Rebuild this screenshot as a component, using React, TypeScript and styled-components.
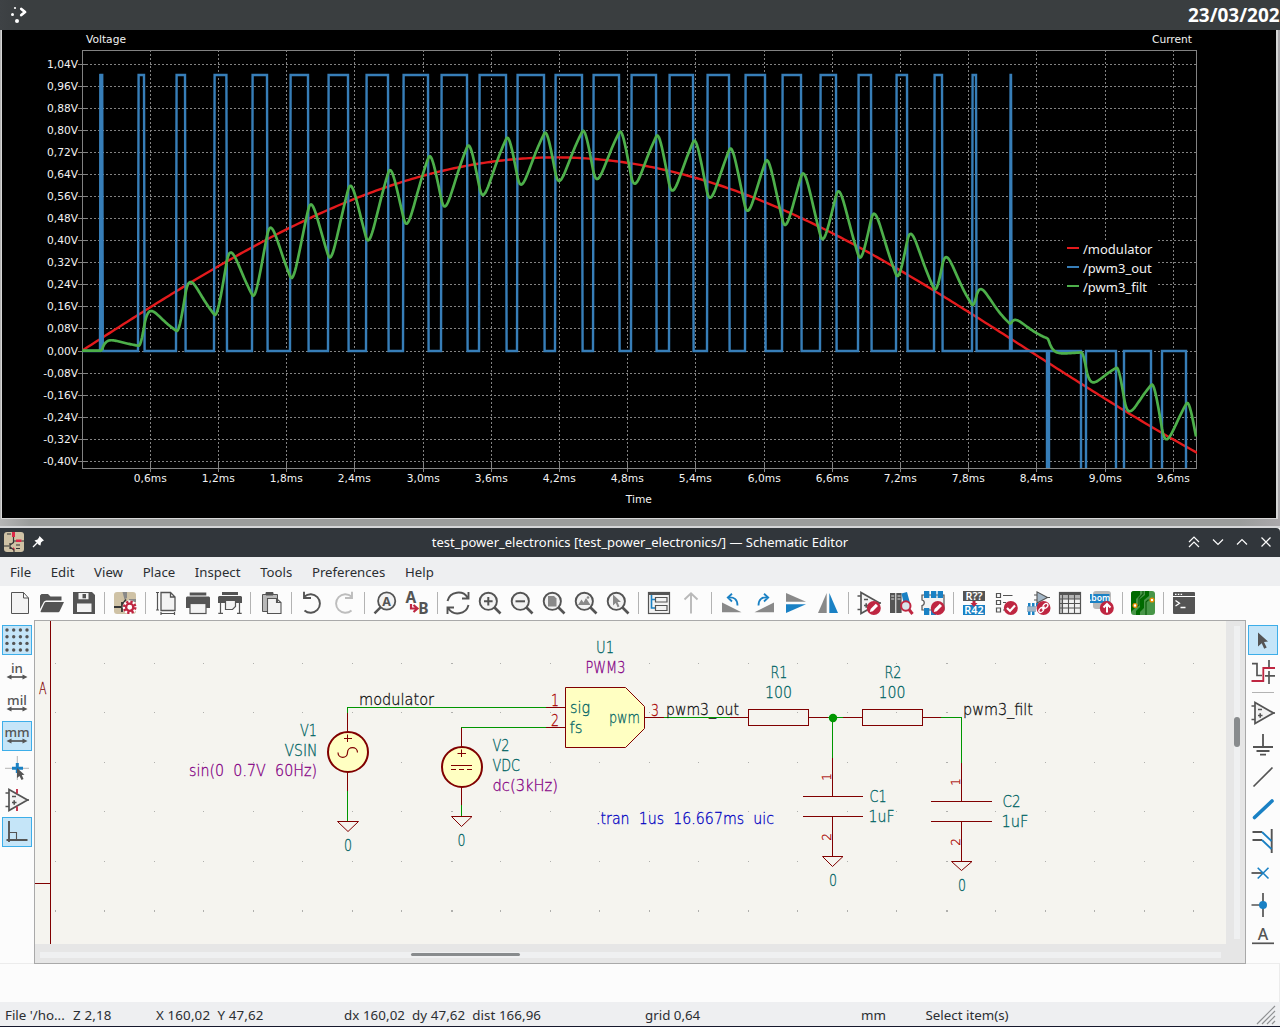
import React from "react";
import styled, { createGlobalStyle } from "styled-components";

const UI = '"Noto Sans", "Open Sans", sans-serif';
const AXIS = '"DejaVu Sans", sans-serif';
const D = "#545454";
const L = "#f3f3f3";
const B = "#1a81c4";
const R = "#bf2641";
const G = "#898989";

const Global = createGlobalStyle`
  body { margin: 0; background: #fcfcfc; overflow: hidden; }
  * { box-sizing: border-box; }
  svg { display: block; flex: none; }
`;

const Screen = styled.div`
  width: 1280px; height: 1027px; display: flex; flex-direction: column;
  overflow: hidden; font-family: ${UI}; font-size: 13.33px; color: #2b2e31;
`;
const Panel = styled.header`
  height: 30px; flex: none; display: flex; align-items: center; justify-content: space-between;
  background: linear-gradient(90deg, #3e4245, #3a3e40 20px, #3a3e40);
  padding-left: 8px;
`;
const Clock = styled.div`
  width: 92px; white-space: nowrap; color: #fff;
  font-weight: 700; font-size: 18.95px; line-height: 30px;
`;
const Desktop = styled.section`
  height: 498px; flex: none; padding-left: 1px;
  background: linear-gradient(90deg, #b5b5b5, #9b9d9c 30px, #9b9d9c 1240px, #aaa8ab);
  border-bottom: 2px solid #d5d6d8;
`;
const SimWindow = styled.div`
  width: 1277px; height: 489px; background: #000;
  border: solid #d6d6d6; border-width: 0 2px 1px 1px;
`;
const TitleBar = styled.div`
  height: 29px; flex: none; display: grid; grid-template-columns: 1fr auto 1fr; align-items: center;
  background: #31363b; color: #fcfcfc; border-radius: 0 4px 0 0; padding: 0 4px 2px;
  font-size: 13px;
`;
const Group = styled.div<{ $end?: boolean; $gap: number }>`
  display: flex; align-items: center; gap: ${p => p.$gap}px;
  justify-content: ${p => (p.$end ? "flex-end" : "flex-start")};
  margin-right: ${p => (p.$end ? 4 : 0)}px;
`;
const MenuBar = styled.nav`
  height: 29px; flex: none; display: flex; align-items: center; gap: 19.7px;
  background: #eeeff1; padding: 0 10px; font-size: 13.2px;
`;
const MenuItem = styled.span`line-height: 20px;`;
const ToolBar = styled.div`
  height: 34px; flex: none; display: flex; align-items: center; padding-left: 4px; background: #fcfcfc;
`;
const Tool = styled.div`
  width: 32px; height: 32px; display: flex; align-items: center; justify-content: center; flex: none;
`;
const IconSvg = styled.svg`overflow: visible;`;
const Sep = styled.div`
  width: 9px; height: 22px; flex: none; display: flex; justify-content: center;
  &::before { content: ""; width: 1px; height: 22px; background: #b3b3b3; }
`;
const Work = styled.div`display: flex; height: 344px; flex: none; background: #fcfcfc;`;
const Side = styled.div`
  width: 34px; flex: none; display: flex; flex-direction: column; align-items: center; gap: 2px;
  padding-top: 5px; height: 344px; overflow: hidden; border-bottom: 1px solid #ececec;
`;
const SideTool = styled.div<{ $on?: boolean }>`
  width: 30px; height: 30px; flex: none; display: flex; align-items: center; justify-content: center;
  border: 1px solid ${p => (p.$on ? "#3daee9" : "transparent")};
  background: ${p => (p.$on ? "#c5e5f8" : "transparent")};
`;
const SideSep = styled.div`
  width: 22px; height: 7px; flex: none; display: flex; align-items: center;
  &::before { content: ""; width: 22px; height: 1px; background: #b3b3b3; }
`;
const CanvasFrame = styled.div`
  width: 1212px; height: 344px; flex: none; border: 1px solid #a9a9a9; background: #e6e6e6;
  display: grid; grid-template: 323px 19px / 1191px 19px;
`;
const VTrack = styled.div`
  margin: 5px 0 5px 8px; width: 6px; background: #eff0f1; padding-top: 91px;
  &::before { content: ""; display: block; height: 30px; border-radius: 3px; background: #888b8d; }
`;
const HTrack = styled.div`
  margin: 8px 5px 0 5px; height: 6px; background: #eff0f1; padding: 1px 0 0 371px;
  &::before { content: ""; display: block; width: 109px; height: 3px; border-radius: 2px; background: #888b8d; }
`;
const MessagePanel = styled.div`height: 38px; flex: none; background: #fcfcfc; border-right: 1px solid #ececec;`;
const StatusBar = styled.footer`
  height: 25px; flex: none; display: grid; align-items: center;
  grid-template-columns: 68px 83px 188px 301px 216px 64.5px 1fr 24px;
  padding: 2px 0 0 5px; background: #eeeff1; border-bottom: 1px solid #15182c; white-space: pre;
`;
const Readout = styled.span<{ $track?: number }>`letter-spacing: ${p => p.$track ?? 0}px;`;

/* ---------- simulation plot ---------- */
const X0 = 82.1, PX_MS = 113.65, Y0 = 350.6, PX_V = 276;
const rises = Array.from({ length: 25 }, (_, k) => 100.2 + k * 37.9);
const falls = [102.2, 144, 185, 226.4, 267, 308, 348, 388, 428, 467, 506, 544, 582, 619, 656, 693, 729, 765, 801, 836, 871, 907, 942, 976, 1011];
const negative: [number, number][] = [[1047, 1049], [1081, 1086], [1116, 1124], [1151, 1162], [1186, 1230]];

function pwmPath() {
  let d = "M82 351";
  rises.forEach((r, i) => {
    const a = Math.round(r), f = falls[i];
    d += `H${a}L${a + 0.6} 75H${f}L${f + 0.6} 351`;
  });
  negative.forEach(([a, b]) => { d += `H${a}V500H${b}V351`; });
  return d;
}
function sinePath() {
  const pts: string[] = [];
  for (let x = 82; x <= 1198; x += 3) {
    const t = (x - X0) / PX_MS / 1000;
    pts.push(`${x} ${(Y0 - PX_V * 0.7 * Math.sin(2 * Math.PI * 60 * t)).toFixed(2)}`);
  }
  return "M" + pts.join("L");
}
/* two cascaded 100 ohm / 1 uF sections driven by the PWM output */
function filteredPath() {
  const tau = 0.1 * PX_MS, h = 0.05;
  let a = 0, b = 0;
  const pts: string[] = [];
  for (let i = 0; i * h + 82 <= 1196; i++) {
    const x = 82 + i * h;
    let v = 0;
    for (let k = 0; k < 25; k++) if (x >= rises[k] + 0.65 - k / 35 && x < falls[k] + 0.25) v = 1;
    for (const [s, e] of negative) if (x >= s + 0.4 && x < e) v = -1;
    const da = (v - 2 * a + b) / tau, db = (a - b) / tau;
    a += da * h; b += db * h;
    if (i % 20 === 0) pts.push(`${x.toFixed(1)} ${(Y0 - PX_V * b).toFixed(2)}`);
  }
  return "M" + pts.join("L");
}
const yTicks = [64, 86, 108, 130, 152, 174, 196, 218, 240, 262, 284, 306, 328, 351, 373, 395, 417, 439, 461];
const xTicks = [150, 218, 286, 354, 423, 491, 559, 627, 695, 764, 832, 900, 968, 1036, 1105, 1173];
const comma = (n: number, digits: number) => n.toFixed(digits).replace(".", ",");

function Plot() {
  return (
    <svg width="1274" height="488" viewBox="2 30 1274 488">
      <defs><clipPath id="area"><rect x="82" y="51" width="1115" height="417" /></clipPath></defs>
      <g stroke="#828282" shapeRendering="crispEdges">
        {yTicks.map(y => <g key={y}><path d={`M82 ${y + 0.5}H1196`} strokeDasharray="2 2" /><path d={`M78 ${y + 0.5}H87`} /></g>)}
        {xTicks.map(x => <g key={x}><path d={`M${x + 0.5} 50V468`} strokeDasharray="2 2" /><path d={`M${x + 0.5} 464V472`} /></g>)}
        <rect x="82.5" y="50.5" width="1114" height="418" fill="none" />
      </g>
      <g fill="none" strokeWidth="2" clipPath="url(#area)" strokeLinejoin="miter">
        <path d={sinePath()} stroke="#e41a1c" strokeWidth="2.4" />
        <path d={pwmPath()} stroke="#377eb8" strokeWidth="2.4" />
        <path d="M101 74V352M1048 350V470" stroke="#377eb8" strokeWidth="3.4" />
        <path d={filteredPath()} stroke="#4daf4a" strokeWidth="2.7" strokeLinejoin="round" />
      </g>
      <g fontFamily={AXIS} fontSize="10.67" fill="#f2f2f2">
        {yTicks.map((y, i) => <text key={y} x="78" y={y + 4} textAnchor="end">{comma(1.04 - i * 0.08 + 1e-9, 2)}V</text>)}
        {xTicks.map((x, i) => <text key={x} x={x + 0.3} y="482" textAnchor="middle">{comma((i + 1) * 0.6, 1)}ms</text>)}
        <text x="86" y="43">Voltage</text>
        <text x="1192" y="43" textAnchor="end">Current</text>
        <text x="638.8" y="503" textAnchor="middle">Time</text>
      </g>
      <rect x="1063" y="240" width="94" height="56" fill="#000" />
      <g fontFamily={UI} fontSize="13" fill="#f2f2f2">
        {[["/modulator", "#e41a1c"], ["/pwm3_out", "#377eb8"], ["/pwm3_filt", "#4daf4a"]].map(([n, c], i) => (
          <g key={n}><rect x="1067" y={247 + 19 * i} width="12" height="2" fill={c} /><text x="1083" y={254 + 19 * i}>{n}</text></g>
        ))}
      </g>
    </svg>
  );
}

/* ---------- schematic ---------- */
const TEAL = "#006464", PURPLE = "#840084", PIN = "#a90000", INK = "#0f0f0f", NOTE = "#0000c2", MAROON = "#800000";
type Lbl = [string, number, number, number, string];
const labels: Lbl[] = [
  ["A", 39, 694, 7.5, MAROON],
  ["U1", 596, 653, 18, TEAL], ["PWM3", 585.5, 673, 40, PURPLE],
  ["R1", 770.5, 678, 17, TEAL], ["100", 765, 698, 27, TEAL],
  ["R2", 884.5, 678, 17, TEAL], ["100", 878.5, 698, 27, TEAL],
  ["sig", 570, 713, 20, TEAL], ["fs", 569.5, 732.5, 13, TEAL], ["pwm", 609, 723, 31, TEAL],
  ["1", 551, 706, 8, PIN], ["2", 551, 725.5, 8, PIN], ["3", 651, 715.5, 8, PIN],
  ["modulator", 359, 705, 75, INK], ["pwm3_out", 666, 715, 73, INK], ["pwm3_filt", 963, 715, 70, INK],
  ["V1", 300, 736, 17, TEAL], ["VSIN", 284.5, 756, 33, TEAL], ["sin(0 0.7V 60Hz)", 189, 776, 128, PURPLE],
  ["V2", 492.5, 751, 17, TEAL], ["VDC", 492.5, 771, 27.5, TEAL], ["dc(3kHz)", 492.5, 791, 65.5, PURPLE],
  [".tran 1us 16.667ms uic", 596, 824, 178, NOTE],
  ["C1", 869.5, 802, 17, TEAL], ["1uF", 868.5, 822, 26, TEAL],
  ["C2", 1002.5, 807, 18, TEAL], ["1uF", 1001.5, 827, 27, TEAL],
  ["0", 344, 851, 8, TEAL], ["0", 457.5, 846, 8, TEAL], ["0", 829, 886, 8, TEAL], ["0", 958, 890.5, 8, TEAL],
];
const turned: [string, number, number][] = [["1", 831, 777], ["2", 831, 837], ["1", 960, 782], ["2", 960, 842]];

function Schematic() {
  const dots: React.ReactNode[] = [];
  [663, 712, 762, 811, 861, 910].forEach((y, j) => {
    for (let i = 0; i < 24; i++)
      dots.push(<rect key={`${i}-${j}`} x={Math.floor(55.3 + i * 49.5)} y={y} width={i === 8 || i === 18 ? 2 : 1} height={j === 5 ? 2 : 1} />);
  });
  return (
    <svg width="1191" height="323" viewBox="35 621 1191 323" style={{ background: "#f5f4ef" }}>
      <g fill="#b0b0ad" shapeRendering="crispEdges">{dots}</g>
      <g fill="none" stroke={MAROON} shapeRendering="crispEdges">
        <path d="M50.5 621V944M35 883.5H50" />
        <path d="M347.5 713V732M347.5 772V792M461.5 727V747M461.5 787V806M545 707.5H566M546 727.5H566M644 717.5H665M730 717.5H749M808 717.5H828M843 717.5H862M922 717.5H942M832.5 757V797M832.5 816V856M961.5 763V802M961.5 821V861" />
        <path d="M803 796.5H863M803 816.5H863M931 801.5H992M931 821.5H992" />
        <rect x="748.5" y="709.5" width="60" height="16" /><rect x="862.5" y="709.5" width="60" height="16" />
      </g>
      <path d="M565.5 687.5H625.5L644.5 706.5V728.5L625.5 747.5H565.5Z" fill="#ffffc2" stroke={MAROON} />
      <g fill="none" stroke="#009600" shapeRendering="crispEdges">
        <path d="M347.5 713V707.5H546M347.5 791V822M461.5 728V727.5H546M461.5 805V817M664 717.5H730M828 717.5H843M832.5 718V758M941 717.5H961.5V763" />
      </g>
      <circle cx="833" cy="718" r="4.2" fill="#009600" />
      <g fill="none" stroke={MAROON}>
        <circle cx="348" cy="752" r="20" strokeWidth="2" fill="#ffffc2" />
        <circle cx="462" cy="767" r="20" strokeWidth="2" fill="#ffffc2" />
        <path d="M347.5 734.5V742M344 738.5H352M461.5 749.5V757M457.5 753.5H466" />
        <path d="M338 752.5C338 759 347.5 759 347.5 752.5S357.5 746 357.5 752.5" strokeWidth="1.2" />
        <path d="M451 765.5H472M451 769.5H456M459 769.5H464M467 769.5H472" />
        <path d="M337.5 821.5H358.5L348 831.5ZM451.5 816.5H472L461.5 826.5ZM822.5 856.5H843L832.5 866.5ZM951.5 861.5H972L961.5 870.5Z" />
      </g>
      <g fontFamily='"DejaVu Sans", sans-serif' fontWeight="200" fontSize="15" strokeWidth="0.28" wordSpacing="5">
        {labels.map(([t, x, y, w, c], i) => (
          <text key={i} x={x} y={y + 0.2} fill={c} stroke={c} textLength={w} lengthAdjust="spacingAndGlyphs">{t}</text>
        ))}
        {turned.map(([t, x, y], i) => (
          <text key={i} transform={`translate(${x} ${y}) rotate(-90)`} textAnchor="middle" fontSize="12" fill={PIN} stroke={PIN}>{t}</text>
        ))}
      </g>
    </svg>
  );
}

/* ---------- icons ---------- */
const Ic = ({ children, s = 24 }: { children: React.ReactNode; s?: number }) => (
  <IconSvg width={s} height={s} viewBox="0 0 24 24" fill="none" stroke={D} strokeWidth="1.6">{children}</IconSvg>
);
const Lens = () => <><circle cx="10.3" cy="10.3" r="8.6" fill={L} strokeWidth="1.9" /><path d="M16 16L22.5 22.5" strokeWidth="2.6" /></>;
const Badge = ({ x = 16.8, children }: { x?: number; children: React.ReactNode }) => (
  <g stroke="none"><circle cx={x} cy="17" r="7" fill={R} />{children}</g>
);
const Pencil = () => <Badge><path d="M12.8 21L13.6 18L18.8 12.8L21 15L15.8 20.2Z" fill="#fff" /></Badge>;
const OpAmp = () => <><path d="M4 1.5V22.5L22.5 12Z" fill={L} strokeWidth="1.7" /><path d="M.5 5H4M.5 18.5H4M22 12H24M7 8.5H11M7 14.5H11.5M9.2 12.3V16.8" strokeWidth="1.6" /></>;
const Word = ({ x, y, s, c = D, w = 600, children }: { x: number; y: number; s: number; c?: string; w?: number; children: string }) => (
  <text x={x} y={y} fontSize={s} fill={c} stroke="none" fontWeight={w} textAnchor="middle" fontFamily={UI}>{children}</text>
);

const icons: Record<string, React.ReactNode> = {
  new: <path d="M3.5 1.5H15.5L20.5 7V22.5H3.5ZM15.5 1.5V7H20.5" fill={L} strokeWidth="1" />,
  open: <g stroke="none" fill={D}><path d="M0 18V4.5L1.5 3H8L10.5 5.5H21.5V9.5H6L4 10.5Z" /><path d="M5.5 11H24L19.5 20.5L18.5 21.3H1L.5 20.5L4.5 12Z" /></g>,
  save: <g stroke="none"><path d="M1 1H20L23 4V23H1Z" fill={D} /><path d="M6.5 2H16.5V8.3H6.5ZM5 12.5H19.5V21H5Z" fill={L} /><path d="M10.5 3H14V7.3H10.5Z" fill={D} /></g>,
  symedit: <><rect x="1" y="1" width="22" height="22" rx="3" fill="#cfc2a5" stroke="none" /><path d="M9.5 1H14V7L11.5 8.5ZM16 8H23V11H16Z" fill={G} stroke="none" /><path d="M1 16H8M9 11V21" stroke="#333" strokeWidth="1.8" /><path d="M9.5 13L13 8.5" stroke="#333" /><circle cx="16.7" cy="16.3" r="7" fill="#fff" stroke="none" /><circle cx="16.7" cy="16.3" r="5.5" stroke={R} strokeWidth="2.6" strokeDasharray="2.3 2.02" /><circle cx="16.7" cy="16.3" r="3.6" stroke={R} strokeWidth="2.3" /></>,
  page: <><path d="M7 1.5H16.5L21 6V19.5H7ZM16.5 1.5V6H21" fill={L} strokeWidth="1.3" /><path d="M3.5 1.5V19M2 1.5H5M2 19H5M7 22.5H20.5M7 21V24M20.5 21V24" strokeWidth="1.2" /></>,
  print: <><path d="M3.7 1.5H20.3V4.5H3.7ZM1 5.5H23L24 6.5V17H20V13H4V17H0V6.5Z" fill={D} stroke="none" /><rect x="4" y="12.5" width="16" height="10" fill={L} strokeWidth="1.2" /></>,
  plot: <><path d="M4 1H20V4H4ZM1 5H23L24 6V12H0V6Z" fill={D} stroke="none" /><path d="M7.5 9.5H17.5V15.5L14.5 18.5H7.5Z" fill={L} strokeWidth="1.2" /><path d="M2.5 12V22M21.5 12V22M.3 22.3H5M19 22.3H23.7" strokeWidth="1.2" /></>,
  paste: <><path d="M3.5 3.5H7V1.5H14V3.5H18.5V20.5H3.5Z" fill="#b9b9b9" strokeWidth="1" /><path d="M7 1.5H14V4.5H7Z" fill={D} stroke="none" /><path d="M8.5 7.5H17.5L22 11.5V22.5H8.5ZM17.5 7.5V11.5H22" fill={L} strokeWidth="1.1" /></>,
  undo: <path d="M4.5 5.5A9.3 9.3 0 1 1 4.5 19.5M4 .8V7H11" strokeWidth="1.9" />,
  redo: <path d="M19.5 5.5A9.3 9.3 0 1 0 19.5 19.5M20 .8V7H13" stroke="#bdbdbd" strokeWidth="1.9" />,
  find: <><circle cx="13.7" cy="10" r="8.6" strokeWidth="1.8" fill={L} /><path d="M7.5 16.3L1.5 22.3" strokeWidth="2.4" /><Word x={13.7} y={14.5} s={12.5} w={700}>A</Word></>,
  replace: <><Word x={5.8} y={11.8} s={15.5} w={700}>A</Word><Word x={18.5} y={22.8} s={15.5} w={700}>B</Word><path d="M6 13V17.5H11M8.5 14L12.5 17.5L8.5 21" stroke={R} strokeWidth="2.2" /></>,
  refresh: <path d="M1.5 10C4 0 17 -1 21.5 6.5M22.5 1V7.5H16M22.5 14C20 24 7 25 2.5 17.5M1.5 23V16.5H8" strokeWidth="1.9" />,
  zin: <><Lens /><path d="M6 10.3H14.6M10.3 6V14.6" strokeWidth="2" /></>,
  zout: <><Lens /><path d="M5.5 10.3H15" strokeWidth="2" /></>,
  zpage: <><Lens /><path d="M6 5H12L14.5 7.5V15.5H6Z" fill={G} stroke="none" /></>,
  zobj: <><Lens /><path d="M4 14L7.5 8.5L9.5 11.5L12 7L16.5 14Z" fill={G} stroke="none" /><circle cx="14" cy="6.5" r="1.3" fill={G} stroke="none" /></>,
  zsel: <><Lens /><path d="M7 3.5L15 11H11.5L13.5 15.5L11.5 16.3L9.8 12L7 14.5Z" fill={G} stroke="none" /></>,
  nav: <><rect x="1.5" y="1.5" width="21" height="21" fill={L} strokeWidth="1.2" /><path d="M1 1H23V4H1Z" fill={D} stroke="none" /><path d="M4.5 4V17H8M4.5 8.5H8" stroke={B} strokeWidth="1.6" /><path d="M8.5 6.5H20V11H8.5ZM8.5 14.5H20V19.5H8.5Z" strokeWidth="1.2" /></>,
  up: <path d="M12 2.5V22.5M5.5 8.5L12 2.2L18.5 8.5" stroke="#b9b9b9" strokeWidth="1.9" />,
  rotl: <><path d="M2 11.5L21.5 21.3H2Z" fill={G} stroke="none" /><path d="M8 6.5C14 5.5 17.5 8.5 17.5 14.5M12 2.8L7.8 6.5L12 10.5" stroke={B} strokeWidth="1.8" /></>,
  rotr: <><path d="M22 11.5L2.5 21.3H22Z" fill={G} stroke="none" /><path d="M16 6.5C10 5.5 6.5 8.5 6.5 14.5M12 2.8L16.2 6.5L12 10.5" stroke={B} strokeWidth="1.8" /></>,
  flipv: <g stroke="none"><path d="M2 2L22 10.7H2Z" fill={G} /><path d="M2 13.3H22L2 22Z" fill={B} /></g>,
  fliph: <g stroke="none"><path d="M10.7 2V22H2Z" fill={G} /><path d="M13.3 2V22H22Z" fill={B} /></g>,
  opedit: <><OpAmp /><Pencil /></>,
  lib: <g stroke="none"><path d="M1 2H6.3V22H1ZM7.3 2H12.6V22H7.3Z" fill={D} /><path d="M2.2 5H5.2M2.2 8H5.2M8.5 5H11.5M8.5 8H11.5" stroke="#ddd" strokeWidth="1" /><path d="M12.5 2.5L18 1L21 12L15 14Z" fill={B} /><circle cx="16.8" cy="15" r="4.7" fill="#d9e4ea" stroke={R} strokeWidth="2" /><path d="M20 18.5L23.5 23" stroke={R} strokeWidth="3" /></g>,
  fpedit: <><path d="M1 4H23V19H1V14.5C4 14 4 9.5 1 9Z" fill={L} strokeWidth="1.2" /><path d="M3 0H8.3V7H3ZM10 0H15.3V7H10ZM16.7 0H22V7H16.7ZM3 17H8.3V24H3ZM10 17H15V24H10Z" fill={B} stroke="none" /><Pencil /></>,
  annot: <g stroke="none"><path d="M1 0H23V10H1Z" fill={D} /><path d="M1 14H23V24H1Z" fill={B} /><Word x={12} y={8.8} s={10.8} c="#fff">R??</Word><Word x={12} y={22.9} s={10.8} c="#fff">R42</Word><path d="M10.5 10H13.5V12H15.5L12 16L8.5 12H10.5Z" fill={R} /></g>,
  erc: <><path d="M2.5 2.5H6.5V6.5H2.5ZM2.5 9.5H6.5V13.5H2.5ZM2.5 17H6.5V21H2.5Z" strokeWidth="1.2" /><path d="M9 4.5H18.5M9 11.5H12M9 19H11" strokeWidth="1.2" /><Badge><path d="M13 17L16 20L21 14.5" stroke="#fff" strokeWidth="2.2" fill="none" /></Badge></>,
  assign: <><path d="M11 .8V12L21.5 6.5Z" fill="#a3b6c6" strokeWidth="1.1" /><path d="M8 4H11M8 9H11M21 6.5H24" strokeWidth="1" /><path d="M1 15H10V21H1Z" fill="#a3b6c6" stroke="none" /><path d="M2 12H4.5V15.5H2ZM6 12H8.5V15.5H6ZM10 12H12.5V15.5H10ZM2 20.5H4.5V24H2ZM6 20.5H8.5V24H6Z" fill={B} stroke="none" /><Badge x={17.5}><path d="M16 18.5L18.7 15.8" stroke="#fff" strokeWidth="1.3" /><ellipse cx="15.3" cy="19" rx="2.8" ry="1.9" transform="rotate(-45 15.3 19)" fill="none" stroke="#fff" strokeWidth="1.3" /><ellipse cx="19.5" cy="14.9" rx="2.8" ry="1.9" transform="rotate(-45 19.5 14.9)" fill="none" stroke="#fff" strokeWidth="1.3" /></Badge></>,
  table: <><rect x="1.5" y="1.5" width="21" height="21" fill={L} strokeWidth="1.2" /><path d="M1 1H23V4H1Z" fill={D} stroke="none" /><path d="M2 4H22V8H2ZM2 8H4.5V22H2Z" fill="#b5b5b5" stroke="none" /><path d="M1 8H23M1 12.5H23M1 17H23M4.5 4V23M10.5 4V23M16.5 4V23" strokeWidth="1.1" /></>,
  bom: <g stroke="none"><rect x="3" y="0" width="18" height="18" rx="3" fill="#b9b9b9" /><path d="M0 3H19.5V12H0Z" fill={B} /><Word x={9.6} y={10} s={8.6} c="#fff">.bom</Word><Badge><path d="M17 21.5V13.5M13.5 16.5L17 13L20.5 16.5" stroke="#fff" strokeWidth="2" fill="none" /></Badge></g>,
  pcb: <g stroke="none"><rect width="24" height="24" rx="3" fill="#489648" /><path d="M3 0H9V4L5 8V16L0 21V3Q0 0 3 0ZM14 0H18V5L13 9V17L9 21V24H5V20L9 16V8L14 4Z" fill="#006a00" /><path d="M12 0V3L8 7V14L5 16M21 9H17L15 11V24" stroke="#0b5e0b" strokeWidth="1.2" fill="none" /><circle cx="4" cy="14.5" r="1.9" fill="#fff" stroke="#e88b00" strokeWidth="1.3" /><circle cx="21" cy="9" r="1.9" fill="#fff" stroke="#e88b00" strokeWidth="1.3" /></g>,
  console: <g stroke="none"><rect x="1" y="1" width="22" height="22" rx="1" fill={D} /><path d="M1 5.5H23" stroke="#fff" strokeWidth="1" /><path d="M3 3.3H4.5M5.8 3.3H7.3M8.6 3.3H10.1" stroke="#fff" strokeWidth="1.3" /><path d="M3.5 9.5L7.5 12.3L3.5 15M8.5 16.5H13.5" stroke="#fff" strokeWidth="1.3" fill="none" /></g>,
  grid: <g stroke="none" fill={D}>{[2, 8.7, 15.4, 22].map(x => [2, 8.7, 15.4, 22].map(y => <circle key={`${x}${y}`} cx={x} cy={y} r="1.7" />))}</g>,
  cross: <><path d="M0 12.3H24M12.3 0V24" stroke="#b5b5b5" strokeWidth="1" /><path d="M7 12.3H18M12.3 7V17" stroke={B} strokeWidth="3" /><path d="M12 12L19.5 18.8L16.8 19L18.5 23L16.5 24L14.5 20L12 22Z" fill={D} stroke="none" /></>,
  hidden: <><OpAmp /><path d="M12 1V5.5M12 18.5V23" stroke={R} strokeWidth="1.8" /></>,
  angle: <><path d="M4 1V22M1.5 20H22.5" strokeWidth="1.9" /><path d="M4 12.5H11.5V19" strokeWidth="1.1" /></>,
  select: <path d="M7 4.5L17 13.5L13 14L15.7 19.5L13.2 20.7L10.7 15.3L7 18.5Z" fill={D} stroke="none" />,
  net: <><path d="M1 3.7H6V15.5H11M18 0V7M18 11V24M14 15.8H24" strokeWidth="1.7" /><path d="M.5 21H12.3V8H24" stroke={R} strokeWidth="1.8" /></>,
  opamp: <OpAmp />,
  gnd: <path d="M12 1V14M2 14H22M5.5 18H18.5M9 21.7H15" strokeWidth="1.8" />,
  wire: <path d="M2.5 21.5L21.5 2.5" strokeWidth="1.7" />,
  bus: <path d="M3.5 20.5L21 4" stroke={B} strokeWidth="3.6" strokeLinecap="round" />,
  entry: <><path d="M1.5 3H11M1.5 11H11M20.7 0V24" strokeWidth="1.9" /><path d="M11 3L20.5 12M11 11L20.5 20" stroke={B} strokeWidth="1.8" /></>,
  noconn: <><path d="M.5 12H12" strokeWidth="1.8" /><path d="M6.7 6.7L17.5 17.5M17.5 6.7L6.7 17.5" stroke={B} strokeWidth="1.6" /></>,
  junction: <><path d="M.5 12H12M12 0V24" strokeWidth="1.7" /><circle cx="12" cy="12" r="4" fill={B} stroke="none" /></>,
  label: <><Word x={12} y={15} s={16} w={500}>A</Word><path d="M1 18.3H23" strokeWidth="1.7" /></>,
};
const unit = (t: string) => (
  <><Word x={12} y={13} s={13.3} w={500}>{t}</Word><path d="M4 17H20" strokeWidth="1.7" /><path d="M1.5 17L6.5 14.5V19.5ZM22.5 17L17.5 14.5V19.5Z" fill={D} stroke="none" /></>
);
["in", "mil", "mm"].forEach(u => { icons[u] = unit(u); });

const toolbar = "new open save | symedit | page print plot | paste | undo redo | find replace | refresh zin zout zpage zobj zsel | nav up | rotl rotr flipv fliph | opedit lib fpedit | annot erc assign table bom | pcb | console".split(" ");
const left = ["grid", "in", "mil", "mm", "cross", "hidden", "angle"];
const right = ["select", "net", "|", "opamp", "gnd", "wire", "bus", "entry", "noconn", "junction", "label"];
const active = ["grid", "mm", "angle", "select"];

const SideBar = ({ items }: { items: string[] }) => (
  <Side>{items.map((n, i) => (n === "|" ? <SideSep key={i} /> : <SideTool key={i} $on={active.includes(n)}><Ic>{icons[n]}</Ic></SideTool>))}</Side>
);

export default function App() {
  return (
    <Screen>
      <Global />
      <Panel>
        <svg width="20" height="20" viewBox="8 5 20 20" fill="#fff">
          <path d="M21.3 9L25 12L21.3 15" fill="none" stroke="#fff" strokeWidth="2.8" strokeLinejoin="round" strokeLinecap="round" />
          <circle cx="15" cy="8" r="1.1" /><circle cx="12.5" cy="14.5" r="1.5" /><circle cx="17" cy="21" r="2" />
        </svg>
        <Clock>23/03/202</Clock>
      </Panel>
      <Desktop><SimWindow><Plot /></SimWindow></Desktop>
      <TitleBar>
        <Group $gap={8}>
          <svg width="20" height="20" viewBox="0 0 20 20">
            <rect width="20" height="20" rx="3" fill="#cfc2a5" />
            <path d="M8 0H11V5H8ZM12 7.5H17.5V10H12ZM9 15L11 17L9 19Z" fill="#dc2848" />
            <path d="M9.5 5V11M9.5 9H12M17.5 9H20M0 14H5M6 11V17M6 13L9.5 10.5M6 15L10 18V20M3 2H7M12 13H16M12 16.5H16" stroke="#333" strokeWidth="1.2" fill="none" />
          </svg>
          <svg width="13" height="13" viewBox="0 0 13 13" fill="#fcfcfc">
            <path d="M7.5 1L12 5.5L10.8 6L9 7.5L8.5 10.5L7 10L2.5 5.5L5.5 4.5L7 2.5Z" /><path d="M5 8L1 12" stroke="#fcfcfc" strokeWidth="1.3" />
          </svg>
        </Group>
        <span>test_power_electronics [test_power_electronics/] — Schematic Editor</span>
        <Group $end $gap={12}>
          {["M1 6L6 1L11 6M1 11L6 6L11 11", "M1 3.5L6 8.5L11 3.5", "M1 8.5L6 3.5L11 8.5", "M1.5 1.5L10.5 10.5M10.5 1.5L1.5 10.5"].map(d => (
            <svg key={d} width="12" height="12" viewBox="0 0 12 12" fill="none" stroke="#fcfcfc" strokeWidth="1.2"><path d={d} /></svg>
          ))}
        </Group>
      </TitleBar>
      <MenuBar>{["File", "Edit", "View", "Place", "Inspect", "Tools", "Preferences", "Help"].map(m => <MenuItem key={m}>{m}</MenuItem>)}</MenuBar>
      <ToolBar>{toolbar.map((n, i) => (n === "|" ? <Sep key={i} /> : <Tool key={i}><Ic>{icons[n]}</Ic></Tool>))}</ToolBar>
      <Work>
        <SideBar items={left} />
        <CanvasFrame><Schematic /><VTrack /><HTrack /></CanvasFrame>
        <SideBar items={right} />
      </Work>
      <MessagePanel />
      <StatusBar>
        <Readout>File '/ho...</Readout><Readout $track={0.15}>Z 2,18</Readout><Readout $track={0.15}>X 160,02  Y 47,62</Readout>
        <Readout $track={0.07}>dx 160,02  dy 47,62  dist 166,96</Readout><Readout>grid 0,64</Readout><Readout>mm</Readout><Readout>Select item(s)</Readout>
        <svg width="20" height="20" viewBox="0 0 20 20" stroke="#8f9193" strokeWidth="1.2"><path d="M1 19L19 1M6 19L19 6M11 19L19 11M16 19L19 16" /></svg>
      </StatusBar>
    </Screen>
  );
}
